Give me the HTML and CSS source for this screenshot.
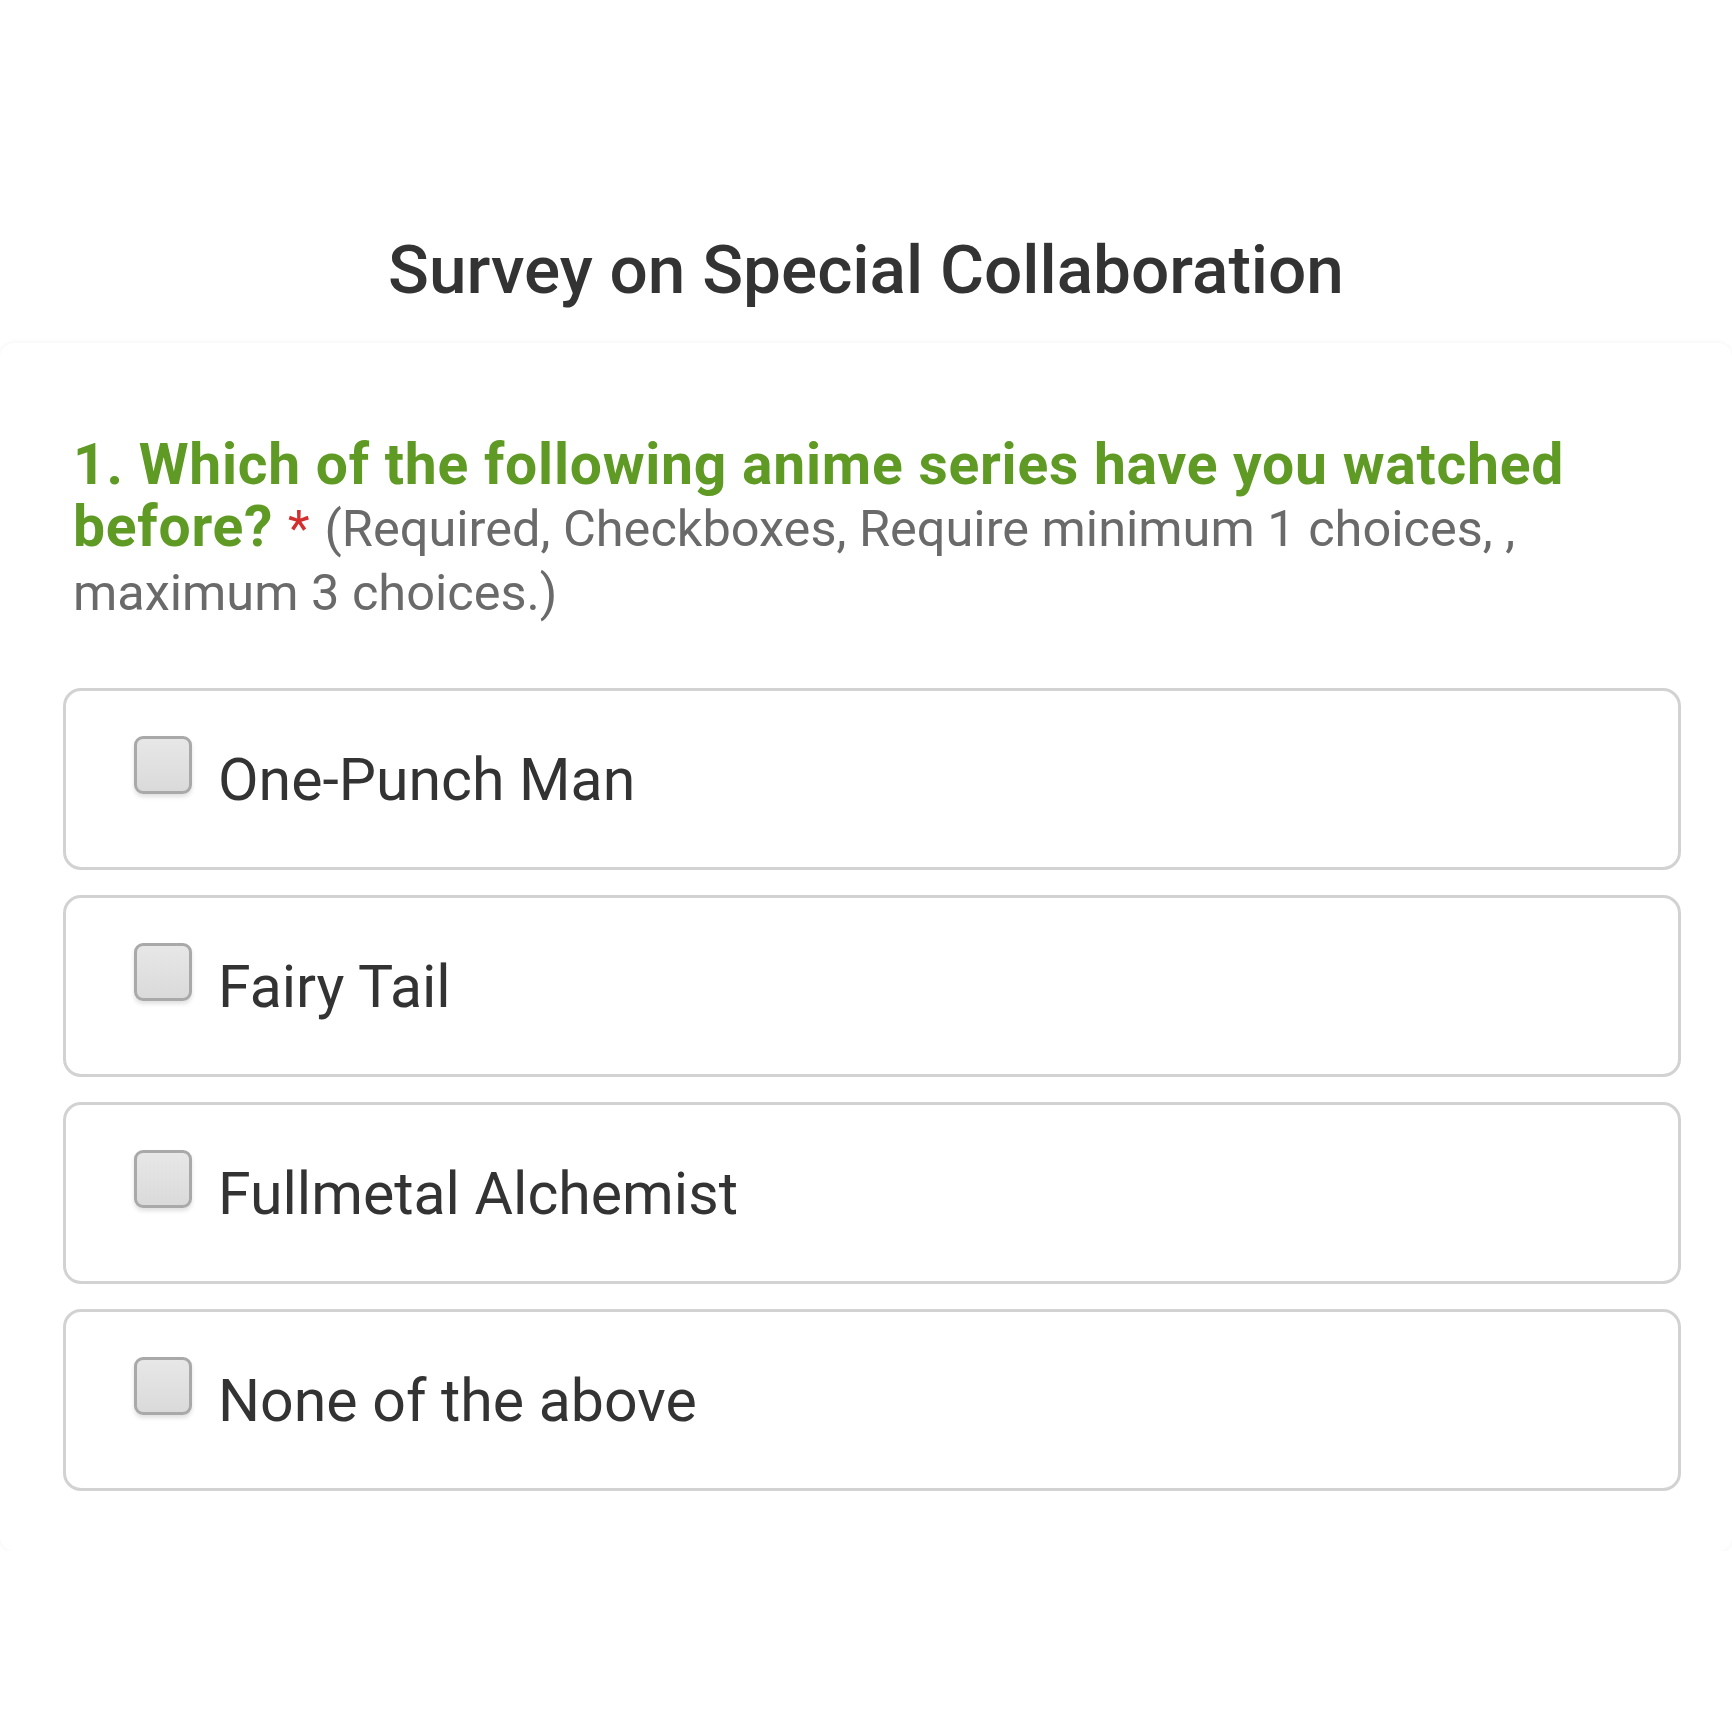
FILE: index.html
```html
<!DOCTYPE html>
<html lang="en">
<head>
<meta charset="utf-8">
<title>Survey on Special Collaboration</title>
<link rel="stylesheet" href="styles.css">
</head>
<body>
<header class="page-header">
  <h1 class="survey-title">Survey on Special Collaboration</h1>
</header>
<main class="card">
  <p class="question">1. Which of the following anime series have you watched before? <span class="req">*</span> <span class="hint">(Required, Checkboxes, Require minimum 1 choices, , maximum 3 choices.)</span></p>
  <div class="options">
    <label class="option"><span class="check"></span><span class="option-text">One-Punch Man</span></label>
    <label class="option"><span class="check"></span><span class="option-text">Fairy Tail</span></label>
    <label class="option"><span class="check"></span><span class="option-text">Fullmetal Alchemist</span></label>
    <label class="option"><span class="check"></span><span class="option-text">None of the above</span></label>
  </div>
</main>
</body>
</html>
```
FILE: styles.css
```css
html, body {
  margin: 0;
  padding: 0;
  background: #ffffff;
}
body {
  font-family: Roboto, "Noto Sans", "Liberation Sans", sans-serif;
  color: #333333;
}
.page-header {
  padding: 230px 0 33px;
  text-align: center;
}
.survey-title {
  margin: 0;
  font-size: 67.5px;
  line-height: 80px;
  font-weight: 500;
  color: #333333;
}
.card {
  display: block;
  background: #ffffff;
  border-radius: 14px;
  box-shadow: 0 0 5px rgba(0, 0, 0, 0.06);
  padding: 91px 51px 60px 63px;
}
.question {
  margin: 0 0 64px 10px;
  font-size: 57px;
  line-height: 62px;
  font-weight: 700;
  letter-spacing: 0.75px;
  color: #5e9a24;
}
.req {
  color: #d32f2f;
  font-weight: 400;
  font-size: 50px;
  letter-spacing: 0;
}
.hint {
  color: #6a6a6a;
  font-weight: 400;
  font-size: 50.5px;
  letter-spacing: 0;
}
.options {
  display: flex;
  flex-direction: column;
  gap: 25px;
}
.option {
  display: flex;
  align-items: flex-start;
  box-sizing: border-box;
  height: 182px;
  border: 3px solid #d2d2d2;
  border-radius: 18px;
  padding: 45px 0 0 68px;
  gap: 26px;
}
.check {
  flex: none;
  box-sizing: border-box;
  width: 58px;
  height: 58px;
  border: 3px solid #a9a9a9;
  border-radius: 9px;
  background: linear-gradient(#e7e7e7, #dadada);
  box-shadow: 0 3px 4px rgba(0, 0, 0, 0.12);
}
.option-text {
  margin-top: 9px;
  font-size: 59px;
  line-height: 70px;
  color: #333333;
}
```
